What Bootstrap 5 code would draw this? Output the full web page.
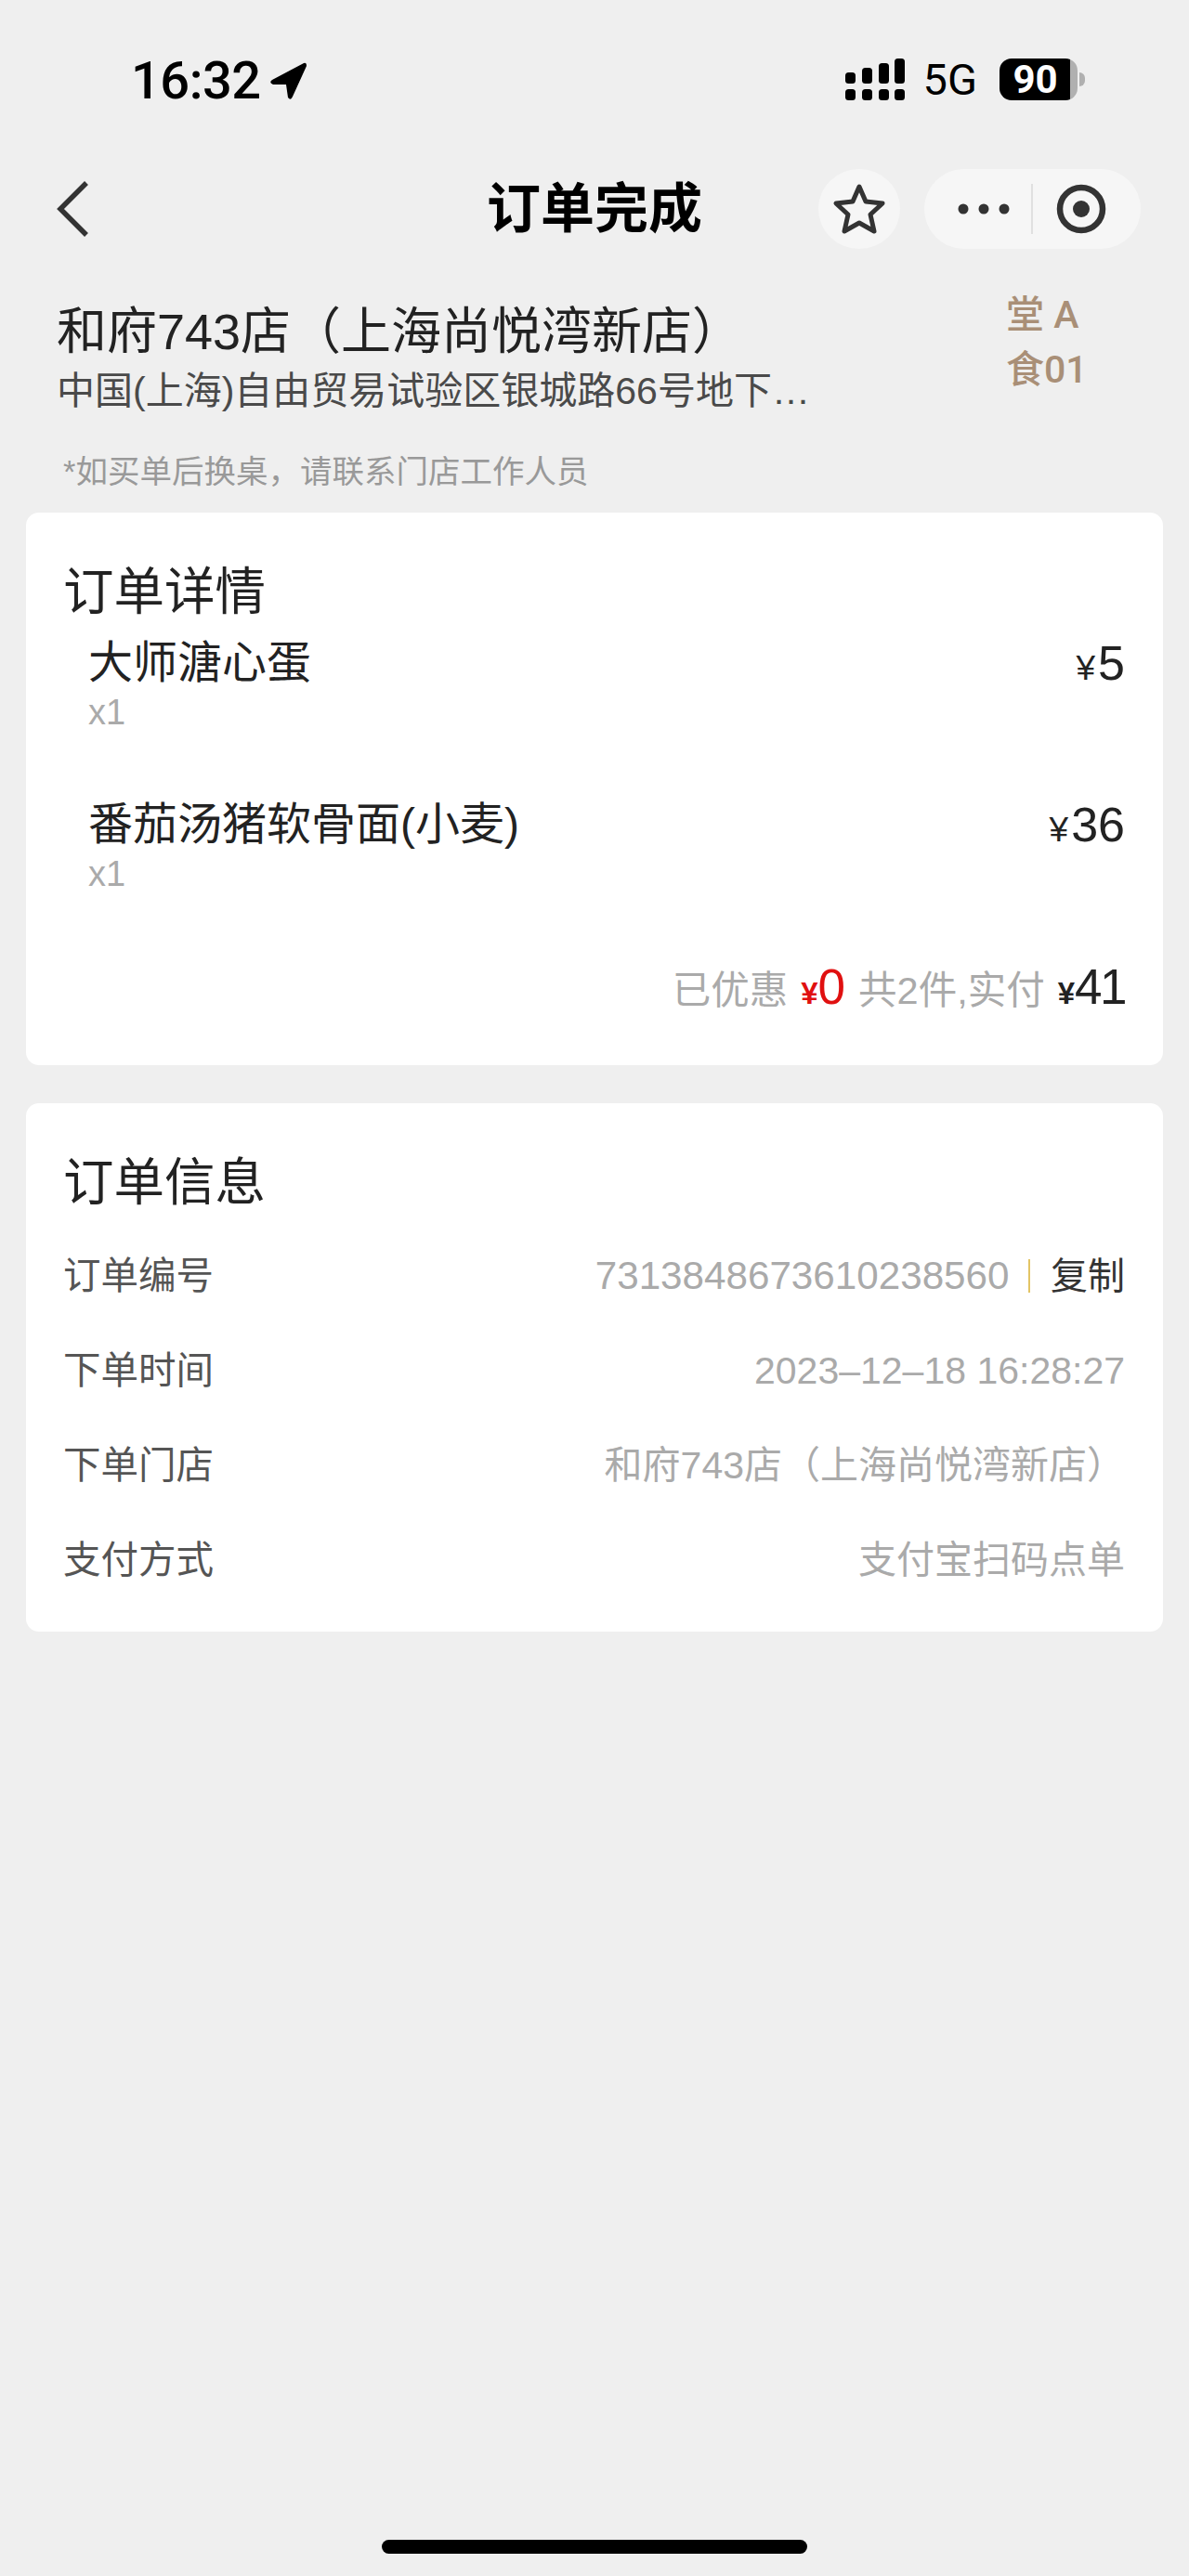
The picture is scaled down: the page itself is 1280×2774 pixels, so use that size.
<!DOCTYPE html>
<html lang="zh">
<head>
<meta charset="utf-8">
<title>订单完成</title>
<link href="https://cdn.jsdelivr.net/npm/bootstrap@5.3.0/dist/css/bootstrap.min.css" rel="stylesheet">
<style>
  body {
    font-family: "Liberation Sans", "Noto Sans CJK SC", sans-serif;
    background-color: #efefef;
    color: #222;
  }
  .page-wrap { min-height: 2774px; }

  .status-row { height: 182px; padding: 63px 112px 0 141px; }
  .status-time { font-family: Roboto, sans-serif; font-size: 56px; font-weight: 500; letter-spacing: -0.5px; line-height: 48px; color: #000; }
  .status-5g { font-family: Roboto, sans-serif; font-size: 47px; line-height: 45px; color: #000; margin-left: 20px; }
  .battery-wrap { width: 92px; height: 45px; }
  .battery-body { width: 84px; height: 45px; border-radius: 13px; background: linear-gradient(90deg, #000 90%, #b0b0b0 90%); color: #fff; font-family: Roboto, sans-serif; font-weight: 700; font-size: 42px; line-height: 45px; padding-right: 7px; }
  .battery-nub { width: 6px; height: 15px; border-radius: 0 6px 6px 0; background: #b0b0b0; margin-left: 2px; }

  .nav-row { height: 86px; padding: 0 52px 0 60px; }
  .nav-title { font-size: 58px; font-weight: 700; color: #000; line-height: 86px; left: 0; right: 0; top: 0; }
  .round-btn { width: 88px; height: 86px; border-radius: 50%; background: #f6f6f6; margin-right: 26px; }
  .capsule-btn { width: 233px; height: 86px; border-radius: 43px; background: #f6f6f6; }

  .store-row { padding: 50px 62px 0 61px; height: 284px; }
  .store-name { font-size: 54px; line-height: 60px; margin-top: 9px; color: #222; }
  .store-addr { font-size: 41px; line-height: 46px; margin-top: 11px; color: #4a4a4a; }
  .table-tag { width: 88px; margin-right: 47px; margin-top: -8px; font-family: Roboto, "Noto Sans CJK SC", sans-serif; font-size: 41px; font-weight: 500; line-height: 59px; color: #a98f77; }
  .store-note { font-size: 34.5px; line-height: 40px; color: #999; margin: 44px 0 0 7px; }

  .info-card { border: 0; border-radius: 14px; margin: 0 28px; background: #fff; }
  .detail-card { padding: 56px 41px 47px 40px; margin-bottom: 41px; }
  .order-card { padding: 56px 41px 47px 40px; }
  .card-head { font-size: 54.5px; line-height: 60px; color: #222; }
  .dish-row { padding-left: 27px; }
  .dish-row + .dish-row { margin-top: 68px; }
  .dish-list { margin-top: 16px; }
  .dish-name { font-size: 48px; line-height: 60px; color: #222; }
  .dish-qty { font-size: 38px; line-height: 46px; color: #aaa; }
  .money-big { font-family: "Liberation Sans", sans-serif; font-size: 52px; line-height: 60px; color: #222; }
  .yen { font-size: 37px; margin-right: 3px; }
  .sum-row { margin-top: 69px; font-size: 41.5px; line-height: 60px; color: #aaa; }
  .sum-row .money-big { font-size: 53px; letter-spacing: -2.5px; margin-left: 14px; }
  .sum-row .yen { font-size: 33px; font-weight: 700; letter-spacing: 0; margin-right: 0; }
  .sum-gap { margin-left: 14px; }
  .sum-row .money-red { letter-spacing: 0; color: #e01010; }
  .info-rows { margin-top: 40px; display: flex; flex-direction: column; gap: 42px; }
  .info-row { line-height: 60px; font-size: 40.5px; }
  .info-key { color: #555; }
  .info-val { color: #aaa; font-size: 41px; }
  .info-num { font-size: 42.2px; }
  .info-date { font-size: 41px; }
  .copy-line { width: 2.5px; height: 36px; background: #e3c565; margin: 0 22px 0 20px; }
  .copy-txt { color: #333; font-size: 40px; }

  .home-bar { width: 458px; height: 15px; border-radius: 8px; background: #000; margin: auto auto 24px; }
</style>
</head>
<body>
<div class="page-wrap d-flex flex-column">

  <div class="status-row d-flex justify-content-between align-items-start">
    <div class="d-flex align-items-center gap-2">
      <span class="status-time">16:32</span>
      <svg width="42" height="42" viewBox="0 0 42 42"><path d="M38 2 L4 20 Q0 23 5 25 L19 25 L21 39 Q24 43 26 38 L41 5 Q41 1 38 2 Z" fill="#000"/></svg>
    </div>
    <div class="d-flex align-items-start">
      <svg width="64" height="45" viewBox="0 0 64 45" fill="#000">
        <rect x="0" y="15" width="11" height="12" rx="3.5"/><rect x="18" y="10" width="11" height="17" rx="3.5"/><rect x="36" y="5" width="11" height="22" rx="3.5"/><rect x="53" y="0" width="11" height="27" rx="3.5"/>
        <rect x="0" y="33" width="11" height="12" rx="3.5"/><rect x="18" y="33" width="11" height="12" rx="3.5"/><rect x="36" y="33" width="11" height="12" rx="3.5"/><rect x="53" y="33" width="11" height="12" rx="3.5"/>
      </svg>
      <span class="status-5g">5G</span>
      <div class="battery-wrap d-flex align-items-center ms-4">
        <div class="battery-body text-center">90</div>
        <div class="battery-nub"></div>
      </div>
    </div>
  </div>

  <div class="nav-row d-flex align-items-center position-relative">
    <div class="nav-title position-absolute text-center">订单完成</div>
    <svg class="position-relative" width="36" height="60" viewBox="0 0 36 60" fill="none"><path d="M33 2 L5 30 L33 58" stroke="#333" stroke-width="5.5"/></svg>
    <div class="round-btn d-flex align-items-center justify-content-center ms-auto position-relative">
      <svg width="58" height="56" viewBox="0 0 58 56" fill="none"><path d="M29 4 L36 20 L54 22 L41 34 L45 52 L29 43 L13 52 L17 34 L4 22 L22 20 Z" stroke="#333" stroke-width="5" stroke-linejoin="round"/></svg>
    </div>
    <div class="capsule-btn position-relative">
      <svg width="233" height="86" viewBox="0 0 233 86" fill="none">
        <circle cx="42" cy="43" r="5.5" fill="#333"/><circle cx="64" cy="43" r="5.5" fill="#333"/><circle cx="86" cy="43" r="5.5" fill="#333"/>
        <path d="M116 16 V70" stroke="#d8d8d8" stroke-width="1.5"/>
        <circle cx="169" cy="43" r="23" stroke="#333" stroke-width="6.5"/><circle cx="169" cy="43" r="9" fill="#333"/>
      </svg>
    </div>
  </div>

  <div class="store-row">
    <div class="d-flex justify-content-between">
      <div>
        <div class="store-name">和府743店（上海尚悦湾新店）</div>
        <div class="store-addr">中国(上海)自由贸易试验区银城路66号地下…</div>
      </div>
      <div class="table-tag">堂 A<br>食01</div>
    </div>
    <div class="store-note">*如买单后换桌，请联系门店工作人员</div>
  </div>

  <div class="card info-card detail-card">
    <div class="card-head">订单详情</div>
    <div class="dish-list">
      <div class="dish-row d-flex justify-content-between">
        <div>
          <div class="dish-name">大师溏心蛋</div>
          <div class="dish-qty">x1</div>
        </div>
        <div class="money-big"><span class="yen">¥</span>5</div>
      </div>
      <div class="dish-row d-flex justify-content-between">
        <div>
          <div class="dish-name">番茄汤猪软骨面(小麦)</div>
          <div class="dish-qty">x1</div>
        </div>
        <div class="money-big"><span class="yen">¥</span>36</div>
      </div>
    </div>
    <div class="sum-row d-flex justify-content-end align-items-baseline">
      <span>已优惠</span>
      <span class="money-big money-red"><span class="yen">¥</span>0</span>
      <span class="sum-gap">共2件,实付</span>
      <span class="money-big"><span class="yen">¥</span>41</span>
    </div>
  </div>

  <div class="card info-card order-card">
    <div class="card-head">订单信息</div>
    <div class="info-rows">
      <div class="info-row d-flex justify-content-between align-items-center">
        <span class="info-key">订单编号</span>
        <span class="d-flex align-items-center">
          <span class="info-val info-num">7313848673610238560</span>
          <span class="copy-line"></span>
          <span class="copy-txt">复制</span>
        </span>
      </div>
      <div class="info-row d-flex justify-content-between align-items-center">
        <span class="info-key">下单时间</span>
        <span class="info-val info-date">2023–12–18 16:28:27</span>
      </div>
      <div class="info-row d-flex justify-content-between align-items-center">
        <span class="info-key">下单门店</span>
        <span class="info-val">和府743店（上海尚悦湾新店）</span>
      </div>
      <div class="info-row d-flex justify-content-between align-items-center">
        <span class="info-key">支付方式</span>
        <span class="info-val">支付宝扫码点单</span>
      </div>
    </div>
  </div>

  <div class="home-bar"></div>
</div>
<script src="https://cdn.jsdelivr.net/npm/bootstrap@5.3.0/dist/js/bootstrap.bundle.min.js"></script>
</body>
</html>
